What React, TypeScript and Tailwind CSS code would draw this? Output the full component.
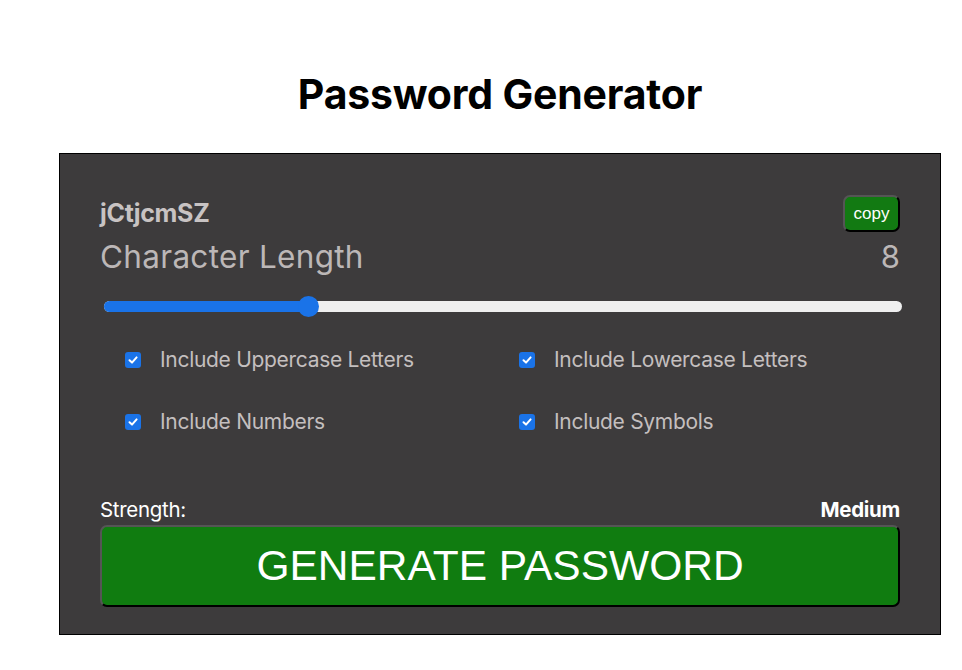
import React from "react";

function Check({ label }: { label: string }) {
  return (
    <div className="flex items-center h-[24px]">
      <div className="w-[16px] h-[16px] rounded-[3px] bg-[#1a73e8] flex items-center justify-center">
        <svg width="12" height="12" viewBox="0 0 12 12">
          <path d="M2.5 6.3 L5 8.6 L9.6 3.4" fill="none" stroke="white" strokeWidth="2" strokeLinecap="round" strokeLinejoin="round" />
        </svg>
      </div>
      <span className="ml-[19px] text-[21px] tracking-[-0.3px] text-[#c4bfbf]">{label}</span>
    </div>
  );
}

export default function App() {
  const pct = 25.6;
  return (
    <div className="w-[962px] h-[670px] bg-white font-['Inter',sans-serif] flex flex-col items-center pl-[38px]">
      <h1 className="mt-[72px] text-[41px] leading-[44px] font-bold text-black tracking-[-0.2px]">
        Password Generator
      </h1>
      <div className="mt-[37px] w-[882px] h-[482px] border border-black bg-[#3d3b3c] px-[40px] flex flex-col">
        <div className="mt-[41px] flex items-center justify-between h-[37px]">
          <span className="text-[25px] font-bold text-[#c8c3c3] tracking-[-0.3px]">jCtjcmSZ</span>
          <button className="h-[37px] w-[57px] rounded-[7px] bg-[#127a12] text-white text-[17px] font-['Liberation_Sans',sans-serif] border-[2px] border-t-[#555] border-l-[#555] border-b-black border-r-black">
            copy
          </button>
        </div>
        <div className="flex items-center justify-between h-[38px] mt-[6px]">
          <span className="text-[31.5px] text-[#bcb7b7] tracking-[0.3px]">Character Length</span>
          <span className="text-[31px] text-[#bcb7b7]">8</span>
        </div>
        <div className="mt-[19px] relative h-[22px] ml-[4px] w-[798px] flex items-center">
          <div className="w-full h-[11px] rounded-full bg-[#efefef] relative overflow-hidden">
            <div className="h-full bg-[#1a73e8]" style={{ width: `${pct}%` }} />
          </div>
          <div
            className="absolute top-[1px] w-[21px] h-[21px] rounded-full bg-[#1a73e8]"
            style={{ left: `calc(${pct}% - 10px)` }}
          />
        </div>
        <div className="mt-[31px] ml-[25px] grid grid-cols-[394px_1fr] gap-y-[38px]">
          <Check label="Include Uppercase Letters" />
          <Check label="Include Lowercase Letters" />
          <Check label="Include Numbers" />
          <Check label="Include Symbols" />
        </div>
        <div className="mt-[64px] flex items-center justify-between h-[24px] text-white text-[20.5px] tracking-[-0.3px]">
          <span>Strength:</span>
          <span className="font-bold">Medium</span>
        </div>
        <button className="mt-[3px] h-[82px] w-full rounded-[7px] bg-[#107c10] text-white text-[42.5px] font-['Liberation_Sans',sans-serif] border-[2px] border-t-[#555] border-l-[#555] border-b-black border-r-black">
          GENERATE PASSWORD
        </button>
      </div>
    </div>
  );
}
